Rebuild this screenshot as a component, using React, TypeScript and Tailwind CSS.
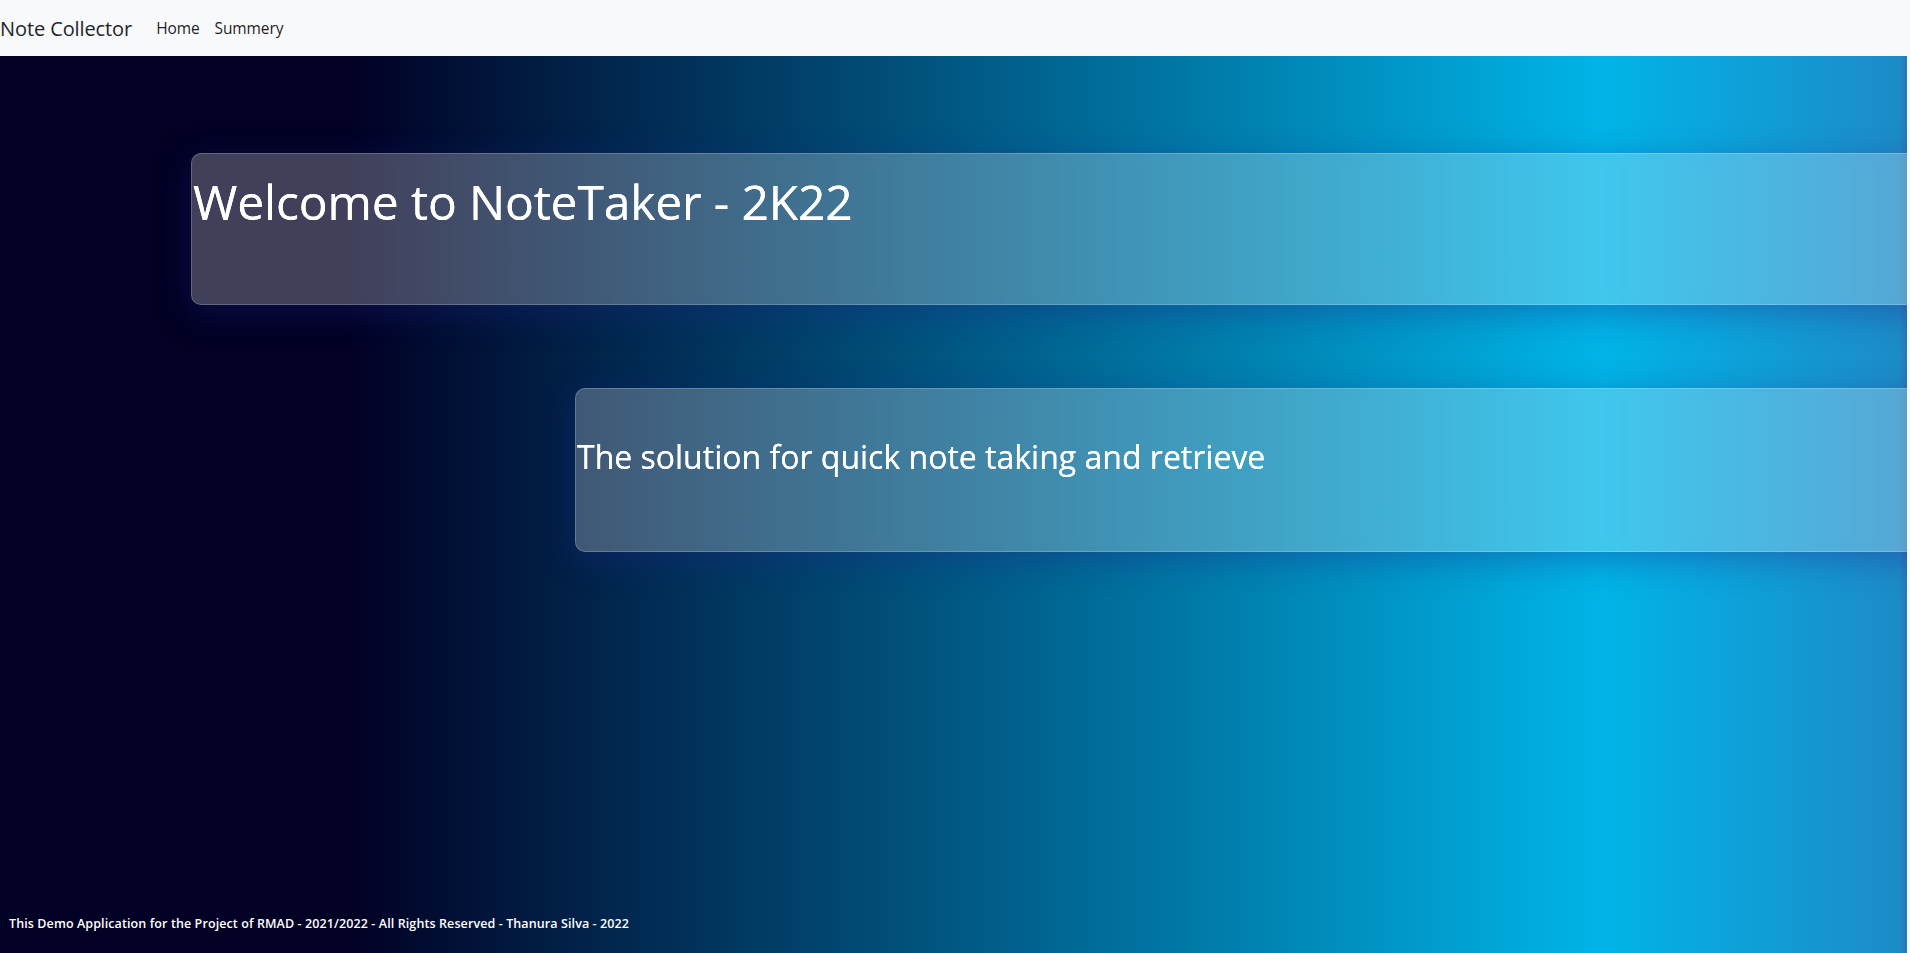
import React from "react";

const font = { fontFamily: '"Open Sans", "Noto Sans", sans-serif' };

const NavBar: React.FC = () => (
  <nav className="flex h-[56px] items-center bg-[#f8f9fa] pt-[1px]">
    <span className="text-[20px] tracking-[-0.1px] text-[#212529]">Note Collector</span>
    <div className="ml-[24px] flex gap-[15px] text-[15.5px] tracking-[-0.1px] text-[#000000e6]">
      <span>Home</span>
      <span>Summery</span>
    </div>
  </nav>
);

const GlassCard: React.FC<{ className?: string; children: React.ReactNode }> = ({
  className,
  children,
}) => (
  <div
    className={`shrink-0 rounded-[10px] border border-white/20 bg-white/25 shadow-[0_8px_32px_0_rgba(31,38,135,0.37)] backdrop-blur-[4px] ${className ?? ""}`}
  >
    {children}
  </div>
);

export default function App() {
  return (
    <div className="flex h-[953px] w-[1910px] flex-col overflow-hidden bg-[#f8f9fa]" style={font}>
      <NavBar />
      <main className="flex w-[1907px] flex-1 flex-col overflow-hidden bg-[linear-gradient(90deg,#020024_18%,#00b4e7_84%,#1d8bc8_99.6%,#2a78b4_100%)]">
        <GlassCard className="ml-[191px] mt-[97px] h-[152px] w-[1760px] pt-[19px]">
          <h1 className="pl-[1px] text-[48px] leading-[1.2] tracking-[-0.15px] text-white [text-shadow:0_0_0.4px_#fff]">
            Welcome to NoteTaker - 2K22
          </h1>
        </GlassCard>

        <GlassCard className="ml-[575px] mt-[83px] flex h-[164px] w-[1400px] items-center">
          <h2 className="-mt-[26px] pl-[1px] text-[32px] leading-[1.2] tracking-[0px] text-white [text-shadow:0_0_0.3px_#fff]">
            The solution for quick note taking and retrieve
          </h2>
        </GlassCard>

        <footer className="mt-auto pb-[19px] pl-[9px] text-[12.5px] font-semibold tracking-[0.1px] text-white">
          This Demo Application for the Project of RMAD - 2021/2022 - All Rights Reserved - Thanura Silva - 2022
        </footer>
      </main>
    </div>
  );
}
